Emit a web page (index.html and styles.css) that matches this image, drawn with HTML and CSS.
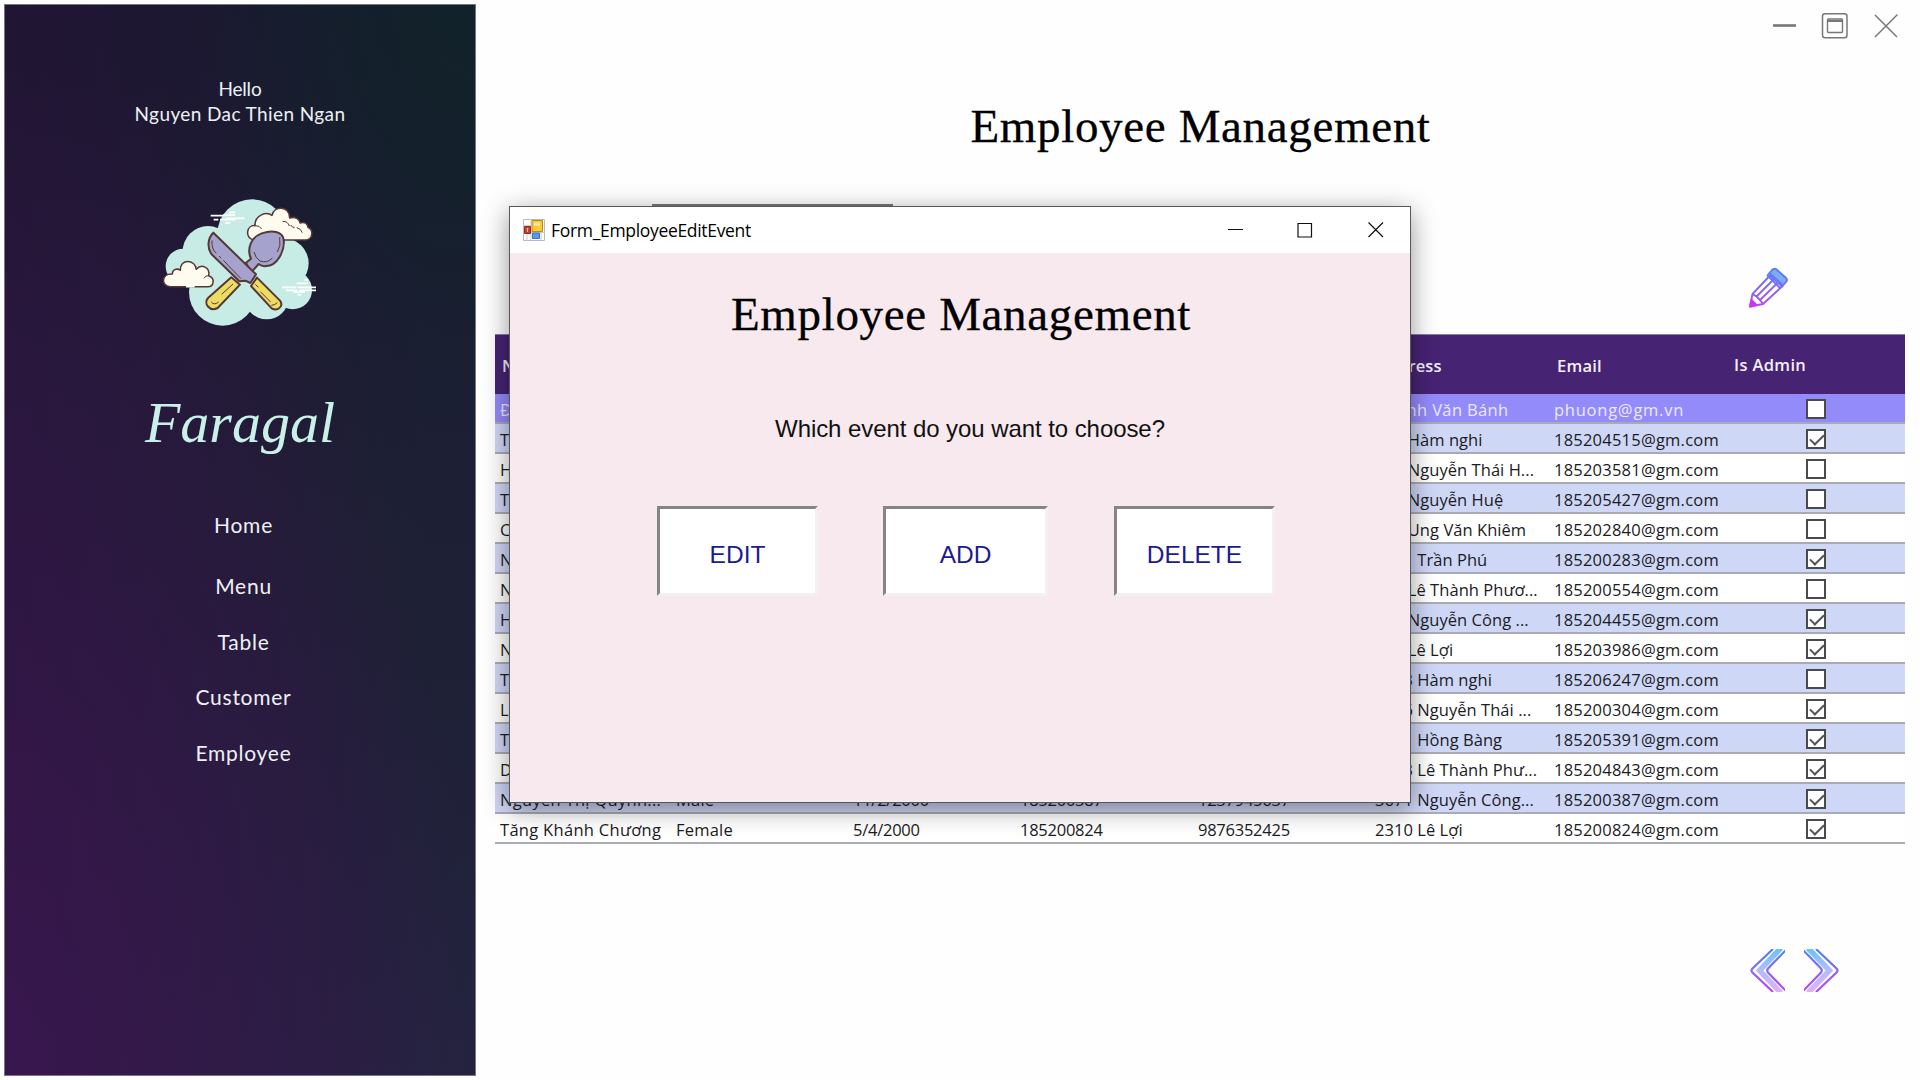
FILE: index.html
```html
<!DOCTYPE html>
<html lang="en">
<head>
<meta charset="utf-8">
<title>Employee Management</title>
<link rel="stylesheet" href="styles.css">
</head>
<body>
<div class="app">
  <aside class="sidebar">
    <div class="greeting"><p class="hello">Hello</p><p class="user">Nguyen Dac Thien Ngan</p></div>
    <svg class="logo" viewBox="0 0 540 480" width="180" height="160">
      <g fill="#c7ece5">
        <circle cx="306" cy="162" r="104"/><circle cx="174" cy="214" r="76"/><circle cx="100" cy="259" r="53"/>
        <circle cx="400" cy="250" r="76"/><circle cx="428" cy="330" r="58"/><circle cx="350" cy="352" r="66"/>
        <circle cx="218" cy="336" r="101"/><path d="M150 180h240v190H170z"/>
      </g>
      <g fill="#fffbef" stroke="#553735" stroke-width="4.5" stroke-linejoin="round">
        <path d="M60 320C32 318 34 280 67 282C68 264 86 266 91 271C90 234 136 238 139 268C154 250 181 262 176 287C197 294 191 320 174 320Z"/>
        <path d="M310 180C282 170 292 134 315 137C314 104 350 94 366 106C371 76 419 76 419 114C436 108 449 118 450 129C466 124 473 132 474 142C492 150 488 180 466 180Z"/>
        <path d="M315 137q14-1 20 10M398 124q16 0 20 14M422 135q5 8 12 8M440 143q12 2 17 15M176 287q-10-1-14 8" fill="none" stroke-width="3"/>
      </g>
      <g fill="none" stroke="#fff" stroke-width="5">
        <path d="M236 97h20M219 105h36M182 107h38M227 115h57M191 119h14M210 119h46M225 129h16M463 300h10M440 310h33M396 322h43M443 322h55M408 331h33M448 331h50M430 336h35M442 344h12M108 320h26"/>
      </g>
      <g stroke="#553735" stroke-width="6" stroke-linejoin="round">
        <path fill="#a5a2ce" d="M288 248L303 236C289 206 304 171 335 160C367 149 397 154 401 178C405 212 382 258 348 258C338 260 330 255 326 252L303 278Z"/>
        <path fill="#ecdc63" d="M244 292L174 354C160 370 178 396 203 384L270 314Z"/>
        <path fill="#a5a2ce" d="M190 158L318 283L301 309L286 302L268 304L184 222C171 203 173 174 190 158Z"/>
        <path fill="#ecdc63" d="M321 293L390 362C402 378 383 396 365 385L303 318Z"/>
      </g>
      <g fill="none" stroke="#553735" stroke-width="3">
        <path d="M186 181q-2 27 13 39M207 228l7 7M220 241l53 55M389 172q5 25-7 44M312 216q4 18 18 27q21 8 37-9M215 343l34-31M184 366q8 11 22 0M331 335l31 31M316 313l9 9M364 376q12-1 18-8"/>
      </g>
    </svg>
    <div class="brand">Faragal</div>
    <nav class="nav"><a>Home</a><a>Menu</a><a>Table</a><a>Customer</a><a>Employee</a></nav>
  </aside>
  <main class="main">
    <div class="window-tools">
      <svg width="200" height="60" viewBox="0 0 200 60" fill="none" stroke="#777">
        <path d="M53 25.5h23" stroke-width="2.6"/>
        <rect x="102.5" y="13.8" width="24.5" height="24" rx="2.5" stroke-width="1.5"/>
        <rect x="107.5" y="19" width="15" height="13.5" rx="1" stroke-width="1.4"/><path d="M107 21h16" stroke-width="2"/>
        <path d="M155 15l22 22M177.5 14.5l-22.5 22.5" stroke-width="1.5"/>
      </svg>
    </div>
    <h1 class="title">Employee Management</h1>
    <div class="toolbar">
      <div class="search"></div>
      <svg class="pencil" viewBox="0 0 40 42" width="40" height="42">
        <defs><linearGradient id="ink" x1="0" y1="0" x2="0" y2="42" gradientUnits="userSpaceOnUse"><stop offset="0" stop-color="#4f82f5"/><stop offset=".5" stop-color="#8268f5"/><stop offset="1" stop-color="#b948f0"/></linearGradient>
        <linearGradient id="soft" x1="0" y1="0" x2="0" y2="43" gradientUnits="userSpaceOnUse"><stop offset="0" stop-color="#69c3fa"/><stop offset=".5" stop-color="#b4bcfa"/><stop offset="1" stop-color="#dfb0fb"/></linearGradient></defs>
        <g fill="none" stroke="url(#ink)" stroke-width="1.9" stroke-linejoin="round">
          <path d="M4.500 27L22 8.500L34 19.500L15 37L2 39.500Z"/><path d="M8.500 29.500L26 12M12 33L30 15.500M4.500 27l4 2.500l3.500 3.500l3 4"/>
          <path d="M24 3Q26 1 28 2L38 11Q40 13 38 15L35 18.500L21.500 6Z" fill="#7aaef5"/>
          <path d="M21.500 6L19.500 8.500L32 21L35 18.500"/><path d="M2 39.500l1.500-6.500l5 5Z" fill="#cf35ee" stroke="#cf35ee"/>
        </g>
      </svg>
    </div>
    <div class="grid">
      <div class="row head"><span>Name</span><span>Gender</span><span>Birthday</span><span>ID</span><span>Phone</span><span>Address</span><span>Email</span><span>Is Admin</span></div>
      <div class="row selected"><span>Đặng Phương</span><span></span><span></span><span></span><span></span><span>Huỳnh Văn Bánh</span><span>phuong@gm.vn</span><span><i class="box"></i></span></div>
      <div class="row"><span>Trần</span><span></span><span></span><span></span><span></span><span>120 Hàm nghi</span><span>185204515@gm.com</span><span><i class="box on"></i></span></div>
      <div class="row"><span>Hồ</span><span></span><span></span><span></span><span></span><span>120 Nguyễn Thái H...</span><span>185203581@gm.com</span><span><i class="box"></i></span></div>
      <div class="row"><span>Trần</span><span></span><span></span><span></span><span></span><span>120 Nguyễn Huệ</span><span>185205427@gm.com</span><span><i class="box"></i></span></div>
      <div class="row"><span>Cao</span><span></span><span></span><span></span><span></span><span>120 Ung Văn Khiêm</span><span>185202840@gm.com</span><span><i class="box"></i></span></div>
      <div class="row"><span>Nguyễn</span><span></span><span></span><span></span><span></span><span>1201 Trần Phú</span><span>185200283@gm.com</span><span><i class="box on"></i></span></div>
      <div class="row"><span>Nguyễn</span><span></span><span></span><span></span><span></span><span>120 Lê Thành Phươ...</span><span>185200554@gm.com</span><span><i class="box"></i></span></div>
      <div class="row"><span>Hồ</span><span></span><span></span><span></span><span></span><span>120 Nguyễn Công ...</span><span>185204455@gm.com</span><span><i class="box on"></i></span></div>
      <div class="row"><span>Nguyễn</span><span></span><span></span><span></span><span></span><span>120 Lê Lợi</span><span>185203986@gm.com</span><span><i class="box on"></i></span></div>
      <div class="row"><span>Trần</span><span></span><span></span><span></span><span></span><span>1203 Hàm nghi</span><span>185206247@gm.com</span><span><i class="box"></i></span></div>
      <div class="row"><span>Lê</span><span></span><span></span><span></span><span></span><span>1206 Nguyễn Thái ...</span><span>185200304@gm.com</span><span><i class="box on"></i></span></div>
      <div class="row"><span>Trần</span><span></span><span></span><span></span><span></span><span>1201 Hồng Bàng</span><span>185205391@gm.com</span><span><i class="box on"></i></span></div>
      <div class="row"><span>Dương</span><span></span><span></span><span></span><span></span><span>1203 Lê Thành Phư...</span><span>185204843@gm.com</span><span><i class="box on"></i></span></div>
      <div class="row"><span>Nguyễn Thị Quỳnh...</span><span>Male</span><span>11/2/2000</span><span>185200387</span><span>1237945637</span><span>3671 Nguyễn Công...</span><span>185200387@gm.com</span><span><i class="box on"></i></span></div>
      <div class="row"><span>Tăng Khánh Chương</span><span>Female</span><span>5/4/2000</span><span>185200824</span><span>9876352425</span><span>2310 Lê Lợi</span><span>185200824@gm.com</span><span><i class="box on"></i></span></div>
    </div>
    <div class="pager">
      <svg viewBox="0 0 35 43" width="35" height="43"><path d="M31 -1L9.500 21.500L31 44" fill="none" stroke="url(#soft)" stroke-width="5.500"/><path d="M23 0L2 20Q1 21.500 2 23L23 43M36 1L18 19.500Q16.500 21.500 18 23.500L36 42" fill="none" stroke="url(#ink)" stroke-width="2.200"/></svg>
      <svg viewBox="0 0 35 43" width="35" height="43"><g transform="matrix(-1 0 0 1 35 0)"><path d="M31 -1L9.500 21.500L31 44" fill="none" stroke="url(#soft)" stroke-width="5.500"/><path d="M23 0L2 20Q1 21.500 2 23L23 43M36 1L18 19.500Q16.500 21.500 18 23.500L36 42" fill="none" stroke="url(#ink)" stroke-width="2.200"/></g></svg>
    </div>
  </main>
</div>
<section class="dialog">
  <header class="titlebar">
    <svg width="22" height="22" viewBox="0 0 22 22">
      <path d="M.5.5h21v21H.5z" fill="#fff" stroke="#bbb"/><path d="M0 6.500h8M8 0v21M8 13.500h14M18 14v7M4 15v6" stroke="#ccc" fill="none"/>
      <path d="M9 1.500h10.500v11H9z" fill="#fcc93c" stroke="#b88b13"/><path d="M11 3.500h6v3h-6z" fill="#ffeaa0"/>
      <path d="M1.500 7.500h6v7h-6z" fill="#c13a2b" stroke="#9b2d20"/><path d="M4.500 9v4M3.500 10h2" stroke="#f4b5a5"/><path d="M9.500 14h7v5.500h-7z" fill="#5c97ea" stroke="#3f75c9"/>
    </svg>
    <span class="caption">Form_EmployeeEditEvent</span>
    <svg class="caption-buttons" width="156" height="16" viewBox="0 0 156 16" fill="none" stroke="#111" stroke-width="1.2">
      <path d="M0 7.500h15M70 1.500h13.500v13.500H70zM140.500 .5l14.500 14.500M155 .5l-14.500 14.500"/>
    </svg>
  </header>
  <h2 class="dialog-title">Employee Management</h2>
  <p class="question">Which event do you want to choose?</p>
  <div class="actions"><button>EDIT</button><button>ADD</button><button>DELETE</button></div>
</section>
</body>
</html>
```
FILE: styles.css
```css
* { box-sizing: border-box; }
body { margin: 0; width: 1920px; height: 1080px; overflow: hidden; background: #fefefe; font-family: "Open Sans", sans-serif; }
p, h1, h2 { margin: 0; font-weight: 400; }
svg { display: block; flex: none; }
.app { display: flex; gap: 19px; padding: 4px; height: 1080px; }

.sidebar {
  width: 472px; height: 1072px; display: flex; flex-direction: column; align-items: center;
  border: 1px solid #777883;
  background:
    radial-gradient(ellipse 60% 35% at 100% 0, #12222a 10%, rgba(18, 34, 42, 0)),
    radial-gradient(ellipse 100% 95% at 0 100%, rgba(60, 22, 82, .8), rgba(60, 22, 82, 0)),
    linear-gradient(90deg, rgba(44, 14, 58, .5), rgba(44, 14, 58, 0) 90%),
    linear-gradient(180deg, #161c2e, #1d2034 50%, #24233f);
  color: #eef1f4; font-family: Lato, sans-serif; font-size: 20px;
}
.greeting { margin-top: 71px; text-align: center; line-height: 25px; font-size: 19px; }
.hello { letter-spacing: -.2px; }
.user { letter-spacing: .4px; }
.logo { margin-top: 54px; }
.brand { height: 110px; margin-top: 30px; color: #c9f0e9; font: italic 58px/106px "Liberation Serif", serif; }
.nav { display: flex; flex-direction: column; align-items: center; margin-top: 30px; padding-left: 7px; line-height: 30px; font-size: 21px; letter-spacing: .75px; }
.nav a { margin-bottom: 25.500px; }
.nav a:first-child { margin-bottom: 31px; }

.main { width: 1421px; }
.window-tools { display: flex; justify-content: flex-end; height: 56px; margin: -4px -4px 0 0; }
.title, .dialog-title { font: 47px/60px "Liberation Serif", serif; color: #000; text-align: center; letter-spacing: .65px; -webkit-text-stroke: .3px #000; }
.title { margin-top: 40px; padding-right: 10px; }
.toolbar { display: flex; justify-content: space-between; height: 130px; margin-top: 48px; }
.search { width: 241px; height: 36px; margin-left: 157px; border: 2px solid #777; }
.pencil { margin: 63px 128px 0 0; }

.grid { width: 1410px; }
.row { display: grid; grid-template-columns: 177px 177px 167px 178px 178px 178px 177px 178px; height: 30px; border-bottom: 2px solid #aaabb2; font-size: 16.500px; line-height: 31px; color: #1b1b22; white-space: nowrap; }
.row span { padding-left: 4px; height: 28px; letter-spacing: -.25px; }
.row span:nth-child(1), .row span:nth-child(2), .row span:nth-child(7) { letter-spacing: .22px; }
.row span:nth-child(1) { padding-left: 5px; letter-spacing: .3px; }
.row span:nth-child(6) { padding-left: 3px; letter-spacing: .05px; }
.row.selected span:nth-child(7) { letter-spacing: .75px; }
.row.selected span:nth-child(6) { letter-spacing: .35px; }
.row.head { height: 60px; border: 0; border-top: 1px solid #8c7ca4; background: #472374; color: #f3eff8; line-height: 61px; font-weight: 600; font-size: 16.500px; }
.row.head span { padding-left: 7px; height: 59px; }
.row.head span:nth-child(6) { padding-left: 5px; }
.row.selected { background: #938bfa; color: #eceaff; }
.row:nth-child(n+3):nth-child(odd) { background: #cfd7f7; }
.row:nth-child(n+4):nth-child(even) { background: #fff; }
.row span:last-child { display: flex; align-items: center; padding-left: 79px; }
.row.head span:last-child { padding-left: 7px; letter-spacing: .35px; }
.box { width: 20px; height: 20px; margin-top: 1px; border: 2px solid #4a4a4c; background: #fff; }
.box.on::after { content: ""; display: block; width: 12px; height: 6px; margin: 3px 0 0 2px; border-left: 2px solid #555; border-bottom: 2px solid #555; transform: rotate(-45deg); }
.row:nth-child(3) { background: #cfd7f7; }
.row:nth-child(n+3):nth-child(odd) .box { background: #fff; }
.pager { display: flex; justify-content: flex-end; gap: 19px; margin: 105px 77px 0 0; }

.dialog { position: absolute; left: 509px; top: 206px; width: 902px; height: 597px; border: 1px solid #58585c; background: #f7e9ed; box-shadow: 0 6px 24px rgba(0, 0, 0, .42); }
.titlebar { display: flex; align-items: center; height: 46px; padding: 0 26px 0 13px; background: #fff; }
.caption { margin-left: 6px; font-size: 17.500px; color: #000; letter-spacing: -.32px; }
.caption-buttons { margin-left: auto; }
.dialog-title { margin-top: 31px; padding-left: 2px; }
.question { margin-top: 63px; padding-left: 20px; text-align: center; font: 24px/44px "Liberation Sans", sans-serif; letter-spacing: -.07px; color: #111; }
.actions { display: flex; margin: 55px 0 0 147px; }
.actions button { width: 161px; height: 90px; padding: 7px 0 0; border: 3px solid; border-color: #858585 #f3f0f1 #f3f0f1 #858585; background: #fff; color: #1b1a93; font: 24.500px "Liberation Sans", sans-serif; }
.actions button:nth-child(2) { width: 165px; margin: 0 66px 0 65px; }
```
